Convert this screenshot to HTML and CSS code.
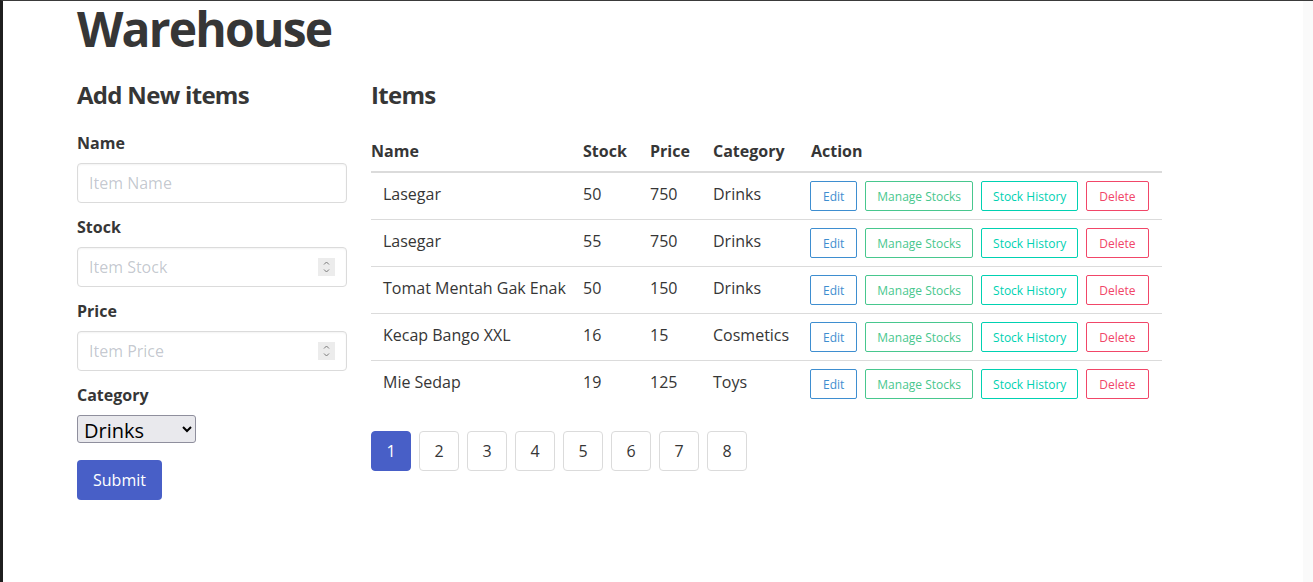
FILE: index.html
```html
<!DOCTYPE html>
<html lang="en">
<head>
<meta charset="utf-8">
<title>Warehouse</title>
<link rel="stylesheet" href="styles.css">
</head>
<body>
<div class="frame">
  <main class="page">
    <h1 class="title">Warehouse</h1>
    <div class="columns">
      <section class="form-col">
        <h2 class="subtitle">Add New items</h2>
        <form class="form">
          <div class="field">
            <label class="label">Name</label>
            <div class="control">
              <input class="input" type="text" placeholder="Item Name">
            </div>
          </div>
          <div class="field">
            <label class="label">Stock</label>
            <div class="control">
              <input class="input" type="text" inputmode="numeric" placeholder="Item Stock">
              <span class="spin" aria-hidden="true">
                <svg width="17" height="18" viewBox="0 0 17 18"><path d="M6 6.5 8.5 4 11 6.5M6 11.5 8.5 14 11 11.5" fill="none" stroke="#7a7a7a" stroke-width="1"/></svg>
              </span>
            </div>
          </div>
          <div class="field">
            <label class="label">Price</label>
            <div class="control">
              <input class="input" type="text" inputmode="numeric" placeholder="Item Price">
              <span class="spin" aria-hidden="true">
                <svg width="17" height="18" viewBox="0 0 17 18"><path d="M6 6.5 8.5 4 11 6.5M6 11.5 8.5 14 11 11.5" fill="none" stroke="#7a7a7a" stroke-width="1"/></svg>
              </span>
            </div>
          </div>
          <div class="field">
            <label class="label">Category</label>
            <select class="select">
              <option>Drinks</option>
              <option>Cosmetics</option>
              <option>Toys</option>
            </select>
          </div>
          <button type="button" class="submit">Submit</button>
        </form>
      </section>
      <section class="list-col">
        <h2 class="subtitle">Items</h2>
        <table class="table">
          <colgroup>
            <col class="c-name"><col class="c-stock"><col class="c-price"><col class="c-cat"><col class="c-act">
          </colgroup>
          <thead>
            <tr><th>Name</th><th>Stock</th><th>Price</th><th>Category</th><th>Action</th></tr>
          </thead>
          <tbody>
            <tr><td>Lasegar</td><td>50</td><td>750</td><td>Drinks</td>
              <td><div class="actions"><button class="btn info">Edit</button><button class="btn success">Manage Stocks</button><button class="btn primary">Stock History</button><button class="btn danger">Delete</button></div></td></tr>
            <tr><td>Lasegar</td><td>55</td><td>750</td><td>Drinks</td>
              <td><div class="actions"><button class="btn info">Edit</button><button class="btn success">Manage Stocks</button><button class="btn primary">Stock History</button><button class="btn danger">Delete</button></div></td></tr>
            <tr><td>Tomat Mentah Gak Enak</td><td>50</td><td>150</td><td>Drinks</td>
              <td><div class="actions"><button class="btn info">Edit</button><button class="btn success">Manage Stocks</button><button class="btn primary">Stock History</button><button class="btn danger">Delete</button></div></td></tr>
            <tr><td>Kecap Bango XXL</td><td>16</td><td>15</td><td>Cosmetics</td>
              <td><div class="actions"><button class="btn info">Edit</button><button class="btn success">Manage Stocks</button><button class="btn primary">Stock History</button><button class="btn danger">Delete</button></div></td></tr>
            <tr><td>Mie Sedap</td><td>19</td><td>125</td><td>Toys</td>
              <td><div class="actions"><button class="btn info">Edit</button><button class="btn success">Manage Stocks</button><button class="btn primary">Stock History</button><button class="btn danger">Delete</button></div></td></tr>
          </tbody>
        </table>
        <nav class="pagination">
          <a class="page-link current">1</a>
          <a class="page-link">2</a>
          <a class="page-link">3</a>
          <a class="page-link">4</a>
          <a class="page-link">5</a>
          <a class="page-link">6</a>
          <a class="page-link">7</a>
          <a class="page-link">8</a>
        </nav>
      </section>
    </div>
  </main>
  <div class="gutter"></div>
</div>
</body>
</html>
```
FILE: styles.css
```css
* { box-sizing: border-box; }
html, body { margin: 0; padding: 0; height: 100%; }
body {
  font-family: "Open Sans", "Noto Sans", sans-serif;
  font-size: 16px;
  color: #4a4a4a;
  background: #fff;
}
.frame {
  display: flex;
  min-height: 100%;
  border-left: 3px solid #1f1f1f;
  border-top: 1px solid #3a3a3a;
}
.page {
  flex: 1;
  padding-left: 74px;
}
.gutter {
  width: 10px;
  background: #fafafa;
}
.title {
  margin: 1px 0 0;
  font-size: 48px;
  line-height: 54px;
  font-weight: 700;
  letter-spacing: -1.8px;
  color: #363636;
}
.columns {
  display: flex;
  gap: 24px;
  margin-top: 25px;
}
.form-col { width: 270px; }
.list-col { width: 791px; }
.subtitle {
  margin: 0 0 23px;
  font-size: 24px;
  line-height: 27px;
  font-weight: 700;
  letter-spacing: -0.7px;
  color: #363636;
}
.field { margin-bottom: 12px; }
.label {
  display: block;
  font-weight: 700;
  color: #363636;
  line-height: 24px;
  margin-bottom: 8px;
}
.control { position: relative; }
.input {
  display: block;
  width: 100%;
  height: 40px;
  border: 1px solid #dbdbdb;
  border-radius: 4px;
  padding: 0 11px;
  font-family: inherit;
  font-size: 16px;
  color: #363636;
  box-shadow: inset 0 1px 2px rgba(10,10,10,.05);
}
.input::placeholder { color: rgba(54,70,93,.3); }
.spin {
  position: absolute;
  right: 12px;
  top: 11px;
  width: 17px;
  height: 18px;
  background: #ececec;
  display: flex;
}
.select {
  display: block;
  width: 119px;
  height: 28px;
  padding: 0 2px;
  font-family: inherit;
  font-size: 20px;
  color: #000;
  background-color: #e9e9ed;
  border: 1px solid #8f8f9d;
  border-radius: 3px;
}
.submit {
  margin-top: 5px;
  height: 40px;
  padding: 0 15px;
  border: 1px solid transparent;
  border-radius: 4px;
  background: #485fc7;
  color: #fff;
  font-family: inherit;
  font-size: 16px;
}
.table {
  width: 791px;
  table-layout: fixed;
  border-collapse: collapse;
  color: #363636;
}
.c-name { width: 200px; }
.c-stock { width: 67px; }
.c-price { width: 63px; }
.c-cat { width: 98px; }
.c-act { width: 363px; }
.table th, .table td {
  text-align: left;
  padding: 8px 12px;
  line-height: 24px;
  vertical-align: top;
  white-space: nowrap;
}
.table th {
  font-weight: 700;
  border-bottom: 2px solid #dbdbdb;
}
.table th:first-child { padding-left: 0; }
.table td { border-bottom: 1px solid #dbdbdb; padding-top: 9px; }
.table td:last-child { padding: 8px 12px 8px 11px; }
.table tbody tr:last-child td { border-bottom: 0; }
.actions { display: flex; gap: 8px; }
.btn {
  height: 30px;
  padding: 0 11px;
  border: 1px solid currentColor;
  border-radius: 2px;
  background: #fff;
  font-family: inherit;
  font-size: 12px;
  white-space: nowrap;
}
.btn.info { color: #3e8ed0; padding: 0 12px; }
.btn.success { color: #48c78e; }
.btn.primary { color: #00d1b2; }
.btn.danger { color: #f14668; padding: 0 12px; }
.pagination {
  display: flex;
  gap: 8px;
  margin-top: 24px;
}
.page-link {
  width: 40px;
  height: 40px;
  display: flex;
  align-items: center;
  justify-content: center;
  border: 1px solid #dbdbdb;
  border-radius: 4px;
  color: #363636;
}
.page-link.current {
  background: #485fc7;
  border-color: #485fc7;
  color: #fff;
}
```
